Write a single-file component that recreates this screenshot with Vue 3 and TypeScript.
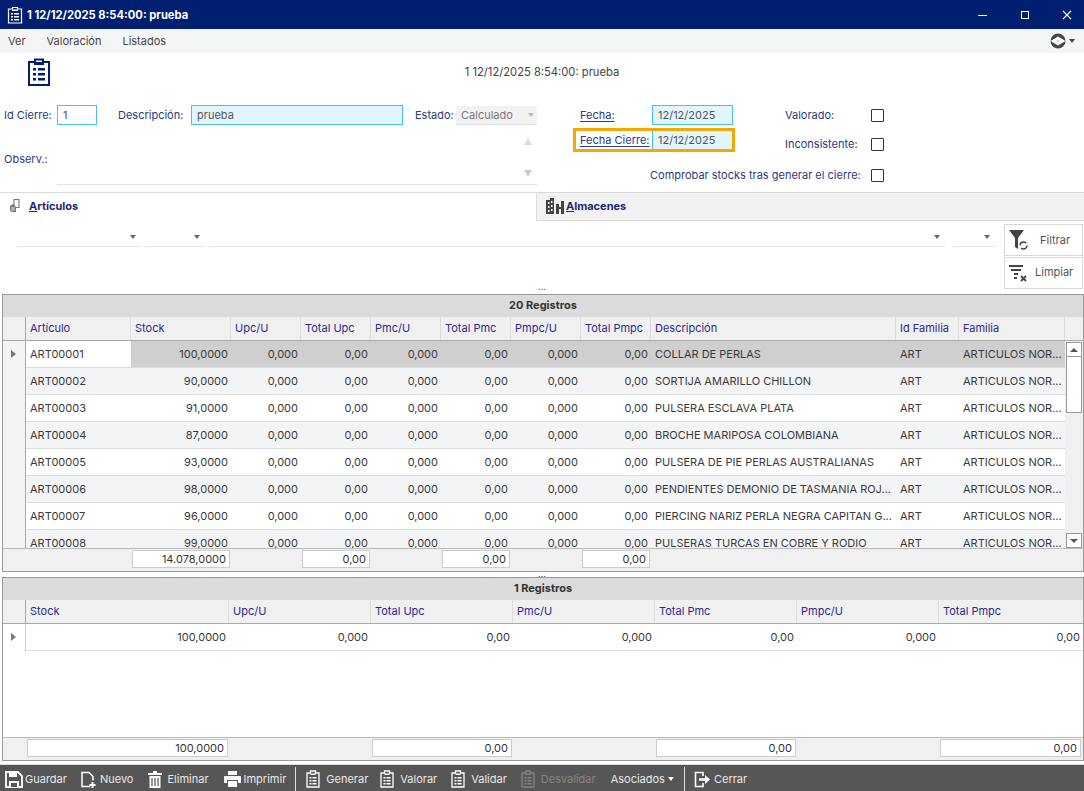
<script setup lang="ts">
const cols1 = [
  { t: 'Artículo', k: 'l' }, { t: 'Stock', k: 'r' }, { t: 'Upc/U', k: 'r' }, { t: 'Total Upc', k: 'r' },
  { t: 'Pmc/U', k: 'r' }, { t: 'Total Pmc', k: 'r' }, { t: 'Pmpc/U', k: 'r' }, { t: 'Total Pmpc', k: 'r' },
  { t: 'Descripción', k: 'l' }, { t: 'Id Familia', k: 'l' }, { t: 'Familia', k: 'l' },
]
const items: [string, string, string][] = [
  ['ART00001', '100,0000', 'COLLAR DE PERLAS'],
  ['ART00002', '90,0000', 'SORTIJA AMARILLO CHILLON'],
  ['ART00003', '91,0000', 'PULSERA ESCLAVA PLATA'],
  ['ART00004', '87,0000', 'BROCHE MARIPOSA COLOMBIANA'],
  ['ART00005', '93,0000', 'PULSERA DE PIE PERLAS AUSTRALIANAS'],
  ['ART00006', '98,0000', 'PENDIENTES DEMONIO DE TASMANIA ROJ...'],
  ['ART00007', '96,0000', 'PIERCING NARIZ PERLA NEGRA CAPITAN G...'],
  ['ART00008', '99,0000', 'PULSERAS TURCAS EN COBRE Y RODIO'],
]
const rows1 = items.map(([a, s, d]) => [a, s, '0,000', '0,00', '0,000', '0,00', '0,000', '0,00', d, 'ART', 'ARTICULOS NOR...'])
const foot1 = ['', '14.078,0000', '', '0,00', '', '0,00', '', '0,00', '', '', '']
const cols2 = ['Stock', 'Upc/U', 'Total Upc', 'Pmc/U', 'Total Pmc', 'Pmpc/U', 'Total Pmpc']
const row2 = ['100,0000', '0,000', '0,00', '0,000', '0,00', '0,000', '0,00']
const foot2 = ['100,0000', '', '0,00', '', '0,00', '', '0,00']
const clipBtns = [
  { t: 'Generar', cls: 'b-gen', c: '#fff' },
  { t: 'Valorar', cls: 'b-val', c: '#fff' },
  { t: 'Validar', cls: 'b-val', c: '#fff' },
  { t: 'Desvalidar', cls: 'b-val off', c: '#858585' },
]
</script>

<template>
  <div class="win">
    <header class="title">
      <svg class="t-ico" width="16" height="18" viewBox="0 0 16 18"><path d="M1.500 3h4V1.500h5V3h4v14h-13z" fill="none" stroke="#fff" stroke-width="1.200"/><path d="M5 3.500h6V5H5zM4 7h2v1.500H4zM7 7h5v1.500H7zM4 10h2v1.500H4zM7 10h5v1.500H7zM4 13h2v1.500H4zM7 13h5v1.500H7z" fill="#fff"/></svg>
      <span class="t-text">1 12/12/2025 8:54:00: prueba</span>
      <div class="t-btns">
        <svg width="10" height="10" viewBox="0 0 10 10"><path d="M0 5.500h9" stroke="#fff" stroke-width="1"/></svg>
        <svg width="10" height="10" viewBox="0 0 10 10"><rect x="1.500" y="1.500" width="7" height="7" fill="none" stroke="#fff"/></svg>
        <svg width="10" height="10" viewBox="0 0 10 10"><path d="M1 1l8 8M9 1l-8 8" stroke="#fff" stroke-width="1.100"/></svg>
      </div>
    </header>

    <nav class="menu">
      <span>Ver</span><span>Valoración</span><span>Listados</span>
      <div class="m-right">
        <svg width="16" height="16" viewBox="0 0 16 16"><circle cx="8" cy="8" r="7.500" fill="#474747"/><path d="M.5 8 8 3.500 15.500 8 8 12.500z" fill="#fff"/><path d="M5.500 8 8 6.500 10.500 8 8 9.500z" fill="#dcdcdc"/></svg>
        <i class="caret dark"></i>
      </div>
    </nav>

    <section class="head">
      <svg class="big-ico" width="22" height="28" viewBox="0 0 22 28"><path d="M1 4h6V1.500h8V4h6v23H1z" fill="none" stroke="#00206f" stroke-width="2"/><path d="M6 4h10v3H6zM5 10h3v2.500H5zM10 10h7v2.500h-7zM5 15h3v2.500H5zM10 15h7v2.500h-7zM5 20h3v2.500H5zM10 20h7v2.500h-7z" fill="#00206f"/></svg>
      <span class="head-title">1 12/12/2025 8:54:00: prueba</span>
    </section>

    <section class="form">
      <div class="f-left">
        <div class="f-row1">
          <label class="l-id">Id Cierre:</label>
          <div class="inp i-id white">1</div>
          <label class="l-desc">Descripción:</label>
          <div class="inp i-desc">prueba</div>
          <label class="l-est">Estado:</label>
          <div class="estado">Calculado<i class="caret pale"></i></div>
        </div>
        <div class="f-row2">
          <label class="l-obs">Observ.:</label>
          <div class="memo">
            <i class="arr up"></i>
            <i class="arr down"></i>
          </div>
        </div>
      </div>
      <div class="f-mid">
        <div class="fecha">
          <label class="link">Fecha:</label>
          <div class="inp i-date">12/12/2025</div>
        </div>
        <div class="fecha hl">
          <label class="link">Fecha Cierre:</label>
          <div class="inp i-date2">12/12/2025</div>
        </div>
      </div>
      <div class="f-right">
        <div class="chk c1"><label>Valorado:</label><i class="box"></i></div>
        <div class="chk c2"><label>Inconsistente:</label><i class="box"></i></div>
        <div class="chk c3"><label>Comprobar stocks tras generar el cierre:</label><i class="box"></i></div>
      </div>
    </section>

    <div class="tabs">
      <div class="tab on">
        <svg width="11" height="14" viewBox="0 0 11 14"><path d="M5 .5h5v8H5z" fill="none" stroke="#777" stroke-width="1.100"/><path d="M1 7l3-2 3 3v5H2.500L1 11.500z" fill="#777"/><path d="M2 9h4M2 11h4" stroke="#fff" stroke-width=".8"/></svg>
        <b><u>A</u>rtículos</b>
      </div>
      <div class="tab off">
        <svg width="18" height="16" viewBox="0 0 18 16"><path d="M0 2h4V0h4v16H0zM10 6h3v3h2V3h3v13h-3v-5h-2v5h-3z" fill="#444"/><path d="M2 4h1.500v2H2zM5 3h1.500v2H5zM2 8h1.500v2H2zM5 7h1.500v2H5zM2 12h1.500v2H2zM5 11h1.500v2H5z" fill="#fff"/></svg>
        <b><u>A</u>lmacenes</b>
      </div>
    </div>

    <section class="filter">
      <div class="dd d1"><i class="caret"></i></div>
      <div class="dd d2"><i class="caret"></i></div>
      <div class="dd d3"><i class="caret"></i></div>
      <div class="dd d4"><i class="caret"></i></div>
      <div class="f-btns">
        <button class="fbtn btn-filter">
          <svg width="22" height="22" viewBox="0 0 22 22"><path d="M1 1h15l-6 8v11l-3-2V9z" fill="#444"/><circle cx="15.500" cy="16.500" r="3.500" fill="none" stroke="#444" stroke-width="1.500" stroke-dasharray="8 3"/></svg>
          <span>Filtrar</span>
        </button>
        <button class="fbtn btn-clear">
          <svg width="22" height="20" viewBox="0 0 22 20"><path d="M1 3h14M3 7h10M6 11h4M6 15h3" stroke="#444" stroke-width="1.800"/><path d="M13 13l5 5M18 13l-5 5" stroke="#444" stroke-width="1.800"/></svg>
          <span>Limpiar</span>
        </button>
      </div>
    </section>
    <div class="dots">...</div>

    <section class="grid g1">
      <div class="g-title">20 Registros</div>
      <div class="g1-head cols1">
        <div class="ind"></div>
        <div v-for="c in cols1" :key="c.t" class="hc">{{ c.t }}</div>
        <div class="hc-end"></div>
      </div>
      <div class="g1-body">
        <div class="g1-rows">
          <div v-for="(r, i) in rows1" :key="i" class="row cols1-in" :class="{ alt: i % 2 === 1, cur: i === 0 }">
            <div class="ind"><i v-if="i === 0" class="tri"></i></div>
            <div v-for="(v, j) in r" :key="j" class="c" :class="{ r: cols1[j].k === 'r', first: j === 0 }">{{ v }}</div>
          </div>
        </div>
        <div class="sbar">
          <div class="sb-btn"><i class="tri-up"></i></div>
          <div class="sb-thumb"></div>
          <div class="sb-track"></div>
          <div class="sb-btn"><i class="tri-down"></i></div>
        </div>
      </div>
      <div class="g-foot cols1">
        <div class="ind"></div>
        <div v-for="(v, j) in foot1" :key="j" class="fc"><span v-if="v" class="fbox">{{ v }}</span></div>
      </div>
    </section>
    <div class="dots dots-2">...</div>

    <section class="grid g2">
      <div class="g-title">1 Registros</div>
      <div class="cols2 g2-head">
        <div class="ind"></div>
        <div v-for="c in cols2" :key="c" class="hc">{{ c }}</div>
      </div>
      <div class="g2-body">
        <div class="cols2 row g2-row">
          <div class="ind"><i class="tri"></i></div>
          <div v-for="(v, j) in row2" :key="j" class="c r">{{ v }}</div>
        </div>
      </div>
      <div class="cols2 g-foot g2-foot">
        <div class="ind"></div>
        <div v-for="(v, j) in foot2" :key="j" class="fc"><span v-if="v" class="fbox">{{ v }}</span></div>
      </div>
    </section>

    <footer class="bar">
      <div class="b b-save"><svg width="18" height="17" viewBox="0 0 18 17"><path d="M1 1h12l4 4v11H1z" fill="none" stroke="#fff" stroke-width="1.800"/><path d="M4 1h8v5H4zM4 10h10v6H4z" fill="#fff"/><path d="M6 12h6v4H6z" fill="#565656"/></svg>Guardar</div>
      <div class="b b-new"><svg width="17" height="17" viewBox="0 0 17 17"><path d="M10 15.500H2V1.500h7l4 4v4" fill="none" stroke="#fff" stroke-width="1.500"/><path d="M11.500 11h2v2h2v2h-2v2h-2v-2h-2v-2h2z" fill="#fff"/></svg>Nuevo</div>
      <div class="b b-del"><svg width="14" height="17" viewBox="0 0 14 17"><path d="M0 2h5V0h4v2h5v2H0zM1.500 5h11v12h-11z" fill="#fff"/><path d="M4 7v8M7 7v8M10 7v8" stroke="#565656" stroke-width="1.200"/></svg>Eliminar</div>
      <div class="b b-pr"><svg width="17" height="16" viewBox="0 0 17 16"><path d="M4 0h9v4H4zM1 5h15a1 1 0 0 1 1 1v6h-3V9H3v3H0V6a1 1 0 0 1 1-1zM4 10h9v6H4z" fill="#fff"/></svg>Imprimir</div>
      <i class="sep"></i>
      <div v-for="b in clipBtns" :key="b.t" class="b" :class="b.cls">
        <svg width="14" height="18" viewBox="0 0 14 18"><path d="M1 3h3.500V1h5v2H13v14H1z" fill="none" :stroke="b.c" stroke-width="1.300"/><path d="M4.500 3.500h5V5h-5zM3.500 7h2v1.500h-2zM6.500 7h4v1.500h-4zM3.500 10h2v1.500h-2zM6.500 10h4v1.500h-4zM3.500 13h2v1.500h-2zM6.500 13h4v1.500h-4z" :fill="b.c"/></svg>{{ b.t }}
      </div>
      <div class="b b-aso">Asociados<i class="caret wh"></i></div>
      <i class="sep s2"></i>
      <div class="b b-close"><svg width="17" height="17" viewBox="0 0 17 17"><path d="M9 5V1.500H1.500v14H9V12" fill="none" stroke="#fff" stroke-width="1.600"/><path d="M5 7.200h6V4l5 4.500L11 13V9.800H5z" fill="#fff"/></svg>Cerrar</div>
    </footer>
  </div>
</template>

<style>
html, body { margin: 0; overflow: hidden; background: #fff; }
</style>

<style scoped>
.win { width: 1084px; height: 791px; overflow: hidden; display: flex; flex-direction: column; font: 11px/14px Inter, "Liberation Sans", sans-serif; color: #333; background: #fff; }
i { display: block; font-style: normal; }
.title { height: 29px; flex: none; background: #001f70; color: #fff; display: flex; align-items: center; padding-left: 7px; }
.t-ico { margin-right: 4px; }
.t-text { font-weight: 700; font-size: 11.200px; }
.t-btns { margin-left: auto; display: flex; gap: 32px; padding-right: 12px; align-items: center; }
.menu { height: 24px; flex: none; background: #f4f5f7; display: flex; align-items: center; padding-left: 8px; gap: 21px; color: #444; position: relative; }
.m-right { margin-left: auto; display: flex; align-items: center; gap: 3px; padding-right: 9px; }
.caret { width: 0; height: 0; border: 3.500px solid transparent; border-top: 4px solid #666; border-bottom: 0; }
.caret.dark { border-top-color: #444; }
.caret.pale { border-top-color: #bbb; }
.caret.wh { border-top-color: #fff; margin-left: 3px; }

.head { height: 52px; flex: none; position: relative; display: flex; justify-content: center; align-items: flex-start; }
.big-ico { position: absolute; left: 28px; top: 5px; }
.head-title { margin-top: 12px; color: #444; font-size: 11.200px; }

.form { height: 87px; flex: none; display: flex; color: #2c3a80; }
.f-left { width: 573px; flex: none; }
.f-row1 { display: flex; align-items: flex-start; height: 21px; line-height: 20px; }
.l-id { margin-left: 4px; width: 53px; }
.l-desc { margin-left: 21px; width: 73px; }
.l-est { margin-left: 12px; width: 41px; }
.inp { height: 20px; box-sizing: border-box; border: 1px solid #45c0f0; background: #e1f5fe; padding-left: 5px; line-height: 18px; color: #555; }
.inp.white { background: #fff; }
.i-id { width: 40px; }
.i-desc { width: 212px; }
.estado { width: 81px; height: 19px; margin-top: 1px; background: #f2f2f2; border-bottom: 1px solid #e2e2e8; color: #777; padding-left: 5px; box-sizing: border-box; line-height: 17px; display: flex; align-items: center; justify-content: space-between; padding-right: 3px; }
.f-row2 { display: flex; }
.l-obs { margin: 26px 0 0 4px; width: 53px; }
.memo { width: 480px; height: 58px; border-bottom: 1px solid #e2e2e8; position: relative; }
.arr { position: absolute; right: 5px; width: 0; height: 0; border: 4px solid transparent; }
.arr.up { top: 12px; border-bottom: 7px solid #ddd; border-top: 0; }
.arr.down { top: 44px; border-top: 7px solid #ccc; border-bottom: 0; }
.f-mid { width: 162px; flex: none; box-sizing: border-box; }
.fecha { display: flex; align-items: flex-start; height: 21px; line-height: 20px; }
.fecha .link { width: 79px; padding-left: 7px; text-decoration: underline; text-underline-offset: 2px; flex: none; box-sizing: border-box; }
.i-date { width: 81px; padding-left: 5px; }
.hl { margin-top: 2px; height: 24px; width: 162px; box-sizing: border-box; border: 3px solid #f5a800; line-height: 18px; }
.hl .link { width: 76px; padding-left: 4px; }
.i-date2 { width: 80px; height: 18px; border: 0; border-left: 1px solid #45c0f0; line-height: 18px; padding-left: 5px; color: #555; }
.f-right { flex: 1; position: relative; }
.chk { display: flex; align-items: center; position: relative; }
.chk .box { width: 11px; height: 11px; border: 1px solid #333; border-radius: 1px; flex: none; }
.c1 { height: 21px; padding-left: 50px; gap: 52px; }
.c1 label { width: 34px; white-space: nowrap; margin-bottom: 2px; }
.c2 { height: 21px; margin-top: 8px; padding-left: 50px; }
.c2 label { width: 86px; margin-bottom: 2px; }
.c3 { height: 20px; margin-top: 10px; margin-left: -85px; }
.c3 label { width: 221px; white-space: nowrap; }

.tabs { height: 29px; flex: none; display: flex; border-top: 1px solid #d8d8d8; box-sizing: border-box; position: relative; }
.tab { display: flex; align-items: center; box-sizing: border-box; color: #1a2a78; font-size: 11px; }
.tab b { font-weight: 700; }
.tab.on { width: 537px; flex: none; background: #fff; padding: 0 0 3px 9px; gap: 9px; border-right: 1px solid #ddd; }
.tab.off { flex: 1; background: #f2f2f2; border-bottom: 1px solid #d8d8d8; padding: 0 0 2px 9px; gap: 2px; }

.filter { height: 69px; flex: none; position: relative; display: flex; align-items: flex-start; }
.dd { height: 26px; box-sizing: border-box; border-bottom: 1px solid #e2e2e8; position: relative; flex: none; margin-right: 4px; }
.dd .caret { position: absolute; right: 5px; top: 14px; }
.d1 { width: 124px; margin-left: 17px; }
.d2 { width: 60px; }
.d3 { width: 736px; }
.d4 { width: 42px; margin-left: 4px; margin-right: 0; }
.f-btns { margin-left: 9px; display: flex; flex-direction: column; gap: 1px; margin-top: 3px; }
.fbtn { width: 79px; height: 32px; box-sizing: border-box; border: 1px solid #d8d8d8; background: #fff; font: inherit; color: #555; display: flex; align-items: center; padding: 0 0 0 3px; }
.btn-filter span { margin-left: 10px; }
.btn-clear span { margin: 0 0 2px 5px; }
.dots { height: 4px; flex: none; text-align: center; line-height: 2px; margin-top: -4px; font-size: 9px; color: #555; position: relative; }
.dots-2 { height: 5px; margin-top: 0; line-height: 4px; }

.grid { margin: 0 0 0 2px; width: 1082px; box-sizing: border-box; border: 1px solid #999; flex: none; display: flex; flex-direction: column; overflow: hidden; background: #fff; }
.g1 { height: 278px; margin-top: 4px; }
.g2 { height: 184px; }
.g-title { height: 22px; flex: none; background: #dbdbdb; text-align: center; font-weight: 700; line-height: 21px; color: #333; font-size: 11px; }
.cols1 { display: grid; grid-template-columns: 23px 105px 100px 70px 70px 70px 70px 70px 70px 245px 63px 106px 1fr; }
.cols1-in { display: grid; grid-template-columns: 23px 105px 100px 70px 70px 70px 70px 70px 70px 245px 63px 106px; }
.cols2 { display: grid; grid-template-columns: 23px 203px 142px 142px 142px 142px 142px 1fr; }
.g1-head, .g2-head { height: 24px; flex: none; background: #f0f0f0; border-bottom: 1px solid #a8a8a8; box-sizing: border-box; }
.ind { border-right: 1px solid #a8a8a8; background: #f0f0f0; position: relative; }
.hc { padding-left: 4px; line-height: 22px; color: #2a2a90; border-right: 1px solid #dcdcdc; }
.hc:last-child { border-right: 0; }
.g1-body { flex: 1; min-height: 0; display: flex; overflow: hidden; }
.g1-rows { width: 1062px; flex: none; overflow: hidden; }
.row { height: 27px; box-sizing: border-box; border-bottom: 1px solid #ddd; background: #fff; }
.row.alt { background: #f3f4f6; }
.row .ind { background: #f4f4f4; margin-bottom: -1px; }
.row.cur { background: #cfcfcf; }
.row.cur .first { background: #fff; }
.c { padding: 0 4px; line-height: 26px; white-space: nowrap; overflow: hidden; color: #3a3a3a; }
.c.r { text-align: right; padding-right: 3px; }
.tri { position: absolute; left: 8px; top: 9px; width: 0; height: 0; border: 4px solid transparent; border-left: 5px solid #777; border-right: 0; }
.sbar { flex: 1; background: #f0f0f0; display: flex; flex-direction: column; padding: 1px 1px 0 1px; overflow: hidden; }
.sb-btn { height: 15px; flex: none; border: 1px solid #999; background: #fff; box-sizing: border-box; display: flex; align-items: center; justify-content: center; }
.tri-up { width: 0; height: 0; border: 4px solid transparent; border-bottom: 4px solid #555; border-top: 0; }
.tri-down { width: 0; height: 0; border: 4px solid transparent; border-top: 4px solid #555; border-bottom: 0; }
.sb-thumb { height: 56px; flex: none; border: 1px solid #999; border-top: 0; background: #fff; box-sizing: border-box; }
.sb-track { flex: 1; }
.g-foot { height: 23px; flex: none; background: #f0f0f0; border-top: 1px solid #bbb; box-sizing: border-box; }
.g-foot .ind { border-right: 0; }
.fc { display: flex; padding: 1px 1px 0 1px; min-width: 0; }
.fbox { flex: 1; height: 18px; box-sizing: border-box; border: 1px solid #ccc; background: #fff; text-align: right; line-height: 16px; padding-right: 3px; color: #333; }
.g2-body { flex: 1; min-height: 0; background: #fff; }
.g2-row { background: #fff; }
.g2-row .ind { background: #fff; border-right: 1px solid #ccc; }
.g2-foot .fc:last-child { padding-right: 2px; }

.bar { flex: 1; background: #565656; border-top: 1px solid #ddd; margin-top: 3px; display: flex; align-items: center; color: #e8e8e8; white-space: nowrap; padding: 2px 0 0 5px; }
.b { display: flex; align-items: center; gap: 3px; }
.b.off { color: #858585; }
.b-save { gap: 2px; }
.b-new { margin-left: 13px; gap: 3px; }
.b-del { margin-left: 15px; gap: 5px; }
.b-pr { margin-left: 15px; gap: 3px; }
.sep { width: 1px; height: 24px; background: #ddd; margin-left: 9px; }
.b-gen { margin: 0 -2px 0 10px; gap: 6px; }
.b-val { margin-left: 14px; gap: 6px; }
.b-aso { margin-left: 15px; gap: 0; }
.s2 { margin-left: 10px; }
.b-close { margin-left: 9px; gap: 3px; }
</style>
